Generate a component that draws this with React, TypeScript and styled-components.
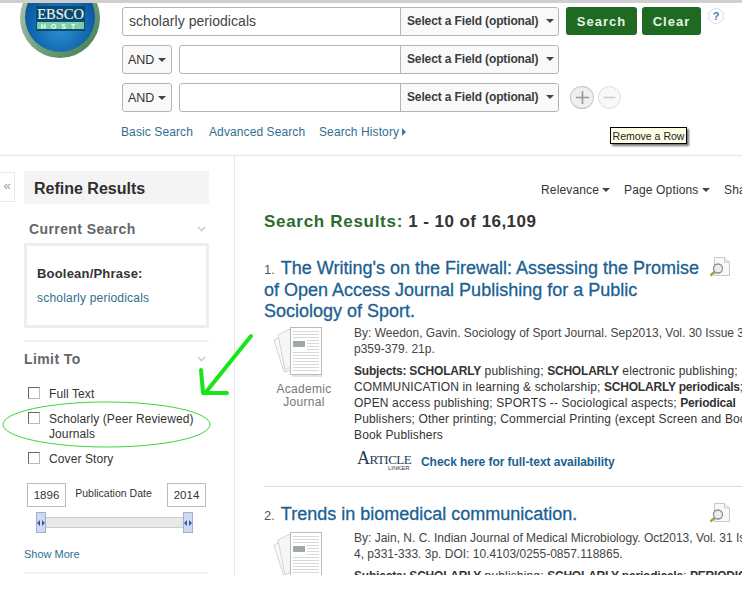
import React from 'react';
import styled, { createGlobalStyle } from 'styled-components';

const GlobalStyle = createGlobalStyle`
    html, body {
        margin: 0;
        padding: 0;
        background: #fff;
        overflow: hidden;
    }
    body {
        font-family: "Liberation Sans", Arial, sans-serif;
        color: #333;
    }
`;

const Page = styled.div`
    position: relative;
    width: 742px;
    height: 604px;
    overflow: hidden;
    background: #fff;
`;

const TopStrip = styled.div`
    height: 3px;
    background: #cfcfcf;
`;

const Header = styled.header`
    position: relative;
    display: flex;
    height: 153px;
    box-sizing: border-box;
    border-bottom: 1px solid #e6e6e6;
`;

const LogoBox = styled.div`
    width: 122px;
    flex: none;
    overflow: hidden;
    height: 60px;
`;

const SearchArea = styled.div`
    display: flex;
    flex-direction: column;
    padding-top: 4px;
`;

const SearchRow = styled.div`
    display: flex;
    align-items: flex-start;
    height: 38px;
`;

const FieldGroup = styled.div`
    display: flex;
    height: 29px;
    box-sizing: border-box;
    border: 1px solid #b4b4b4;
    border-radius: 3px;
    background: #fff;
`;

const TermInput = styled.div<{ $wide?: boolean }>`
    width: ${p => (p.$wide ? 278 : 221)}px;
    box-sizing: border-box;
    padding-left: 6px;
    font-size: 14px;
    line-height: 26px;
    letter-spacing: 0.05px;
    color: #444;
    border-right: 1px solid #b4b4b4;
`;

const FieldSelect = styled.div`
    width: 157px;
    display: flex;
    align-items: center;
    justify-content: space-between;
    box-sizing: border-box;
    padding: 0 4px 1px 6px;
    font-size: 12px;
    font-weight: bold;
    letter-spacing: -0.13px;
    color: #3c3c3c;
    background: #f9f9f9;
    border-radius: 0 3px 3px 0;
`;

const Caret = styled.span`
    display: inline-block;
    width: 0;
    height: 0;
    border-left: 4px solid transparent;
    border-right: 4px solid transparent;
    border-top: 4px solid #444;
`;

const BoolButton = styled.div`
    width: 50px;
    height: 29px;
    margin-right: 7px;
    box-sizing: border-box;
    display: flex;
    align-items: center;
    gap: 4px;
    padding-left: 5px;
    font-size: 12.5px;
    color: #333;
    border: 1px solid #b4b4b4;
    border-radius: 3px;
    background: #f9f9f9;
`;

const GreenButton = styled.div<{ $w: number }>`
    width: ${p => p.$w}px;
    height: 28px;
    margin-left: ${p => (p.$w > 65 ? 7 : 5)}px;
    display: flex;
    align-items: center;
    justify-content: center;
    font-size: 13px;
    font-weight: bold;
    letter-spacing: 1px;
    color: #e8f2e4;
    background: #1f6a22;
    border-radius: 3px;
`;

const HelpBadge = styled.div`
    width: 16px;
    height: 16px;
    margin: 1px 0 0 7px;
    box-sizing: border-box;
    border: 1px solid #d4dde8;
    border-radius: 50%;
    font-size: 11px;
    font-weight: bold;
    line-height: 14px;
    text-align: center;
    color: #4b7fb5;
`;

const RoundButton = styled.div<{ $faded?: boolean }>`
    width: ${p => (p.$faded ? 23 : 24)}px;
    height: 23px;
    margin: 3px 0 0 ${p => (p.$faded ? 4 : 11)}px;
    box-sizing: border-box;
    display: flex;
    align-items: center;
    justify-content: center;
    border: 1px solid ${p => (p.$faded ? '#ddd' : '#c4c4c4')};
    border-radius: 50%;
    background: ${p => (p.$faded ? '#f8f8f8' : '#efefef')};
`;

const SearchLinks = styled.nav`
    display: flex;
    padding: 4px 0 0 0;
    margin-left: -1px;
    font-size: 12px;
    letter-spacing: 0.1px;
    color: #2f6f8f;
`;

const SearchLink = styled.span<{ $w: number }>`
    width: ${p => p.$w}px;
    display: flex;
    align-items: center;
    gap: 3px;
`;

const LinkArrow = styled.span`
    display: inline-block;
    border-left: 4px solid #2f7f9f;
    border-top: 4px solid transparent;
    border-bottom: 4px solid transparent;
`;

const Tooltip = styled.div`
    position: absolute;
    left: 610px;
    top: 124px;
    width: 77px;
    height: 17px;
    box-sizing: border-box;
    border: 1px solid #000;
    background: #ffffe6;
    font-size: 10.5px;
    line-height: 16px;
    text-align: center;
    white-space: nowrap;
    color: #222;
    box-shadow: 2px 2px 2px #777;
`;

const Body = styled.div`
    display: flex;
    height: 419px;
    overflow: hidden;
`;

const CollapseTab = styled.div`
    width: 15px;
    height: 30px;
    margin-top: 16px;
    box-sizing: border-box;
    flex: none;
    border: 1px solid #e8e8e8;
    border-left: none;
    font-size: 13px;
    line-height: 26px;
    text-align: center;
    color: #999;
`;

const Sidebar = styled.aside`
    width: 220px;
    flex: none;
    box-sizing: border-box;
    padding: 15px 25px 0 9px;
    border-right: 1px solid #e6e6e6;
`;

const RefineTitle = styled.div`
    height: 33px;
    padding-left: 10px;
    background: #f4f4f4;
    font-size: 16px;
    font-weight: bold;
    line-height: 35px;
    color: #2e2e2e;
`;

const SectionHead = styled.div<{ $inset?: boolean }>`
    display: flex;
    justify-content: space-between;
    align-items: center;
    padding: 0 3px 0 ${p => (p.$inset ? 5 : 0)}px;
    font-size: 14px;
    font-weight: bold;
    letter-spacing: 0.4px;
    color: #666;
`;

const CurrentHead = styled(SectionHead)`
    margin-top: 17px;
    height: 16px;
`;

const SearchBox = styled.div`
    margin-top: 6px;
    height: 85px;
    box-sizing: border-box;
    padding: 20px 0 0 10px;
    border: 3px solid #eee;
`;

const BoxLabel = styled.div`
    font-size: 13px;
    font-weight: bold;
    letter-spacing: 0.2px;
    color: #333;
`;

const BoxValue = styled.div`
    margin-top: 10px;
    font-size: 12px;
    letter-spacing: 0.2px;
    color: #2f6f8f;
`;

const LimitSection = styled.div`
    margin-top: 12px;
    padding-top: 9px;
    border-top: 2px solid #f0f0f0;
`;

const LimitHead = styled(SectionHead)`
    height: 16px;
`;

const LimitList = styled.div`
    margin-top: 20px;
    display: flex;
    flex-direction: column;
    gap: 10px;
`;

const LimitItem = styled.div`
    display: flex;
    padding-left: 4px;
    font-size: 12px;
    line-height: 15px;
    letter-spacing: 0.1px;
    color: #333;
`;

const Checkbox = styled.span`
    width: 12px;
    height: 12px;
    flex: none;
    box-sizing: border-box;
    margin-right: 9px;
    border: 1px solid #666;
    border-right-color: #bbb;
    border-bottom-color: #bbb;
    background: #fff;
`;

const DateRow = styled.div`
    display: flex;
    justify-content: space-between;
    align-items: flex-start;
    margin-top: 16px;
    padding: 0 3px;
    font-size: 10.5px;
    color: #333;
`;

const DateBox = styled.div`
    width: 39px;
    height: 24px;
    box-sizing: border-box;
    border: 1px solid #bbb;
    font-size: 11.5px;
    line-height: 23px;
    text-align: center;
`;

const DateLabel = styled.div`
    margin: 4px 6px 0 0;
`;

const SliderTrack = styled.div`
    position: relative;
    margin: 10px 25px 0 21px;
    height: 9px;
    background: #e8e8e8;
    border: 1px solid #ccc;
`;

const SliderHandle = styled.span<{ $right?: boolean }>`
    position: absolute;
    top: -6px;
    ${p => (p.$right ? 'right: -10px;' : 'left: -10px;')}
    width: 10px;
    height: 21px;
    box-sizing: border-box;
    border: 1px solid #9fb0d0;
    background: #cfd9f0;
    display: flex;
    align-items: center;
    justify-content: center;
`;

const ShowMore = styled.div`
    margin-top: 20px;
    font-size: 11px;
    color: #2f6f8f;
`;

const SidebarEnd = styled.div`
    margin-top: 12px;
    border-top: 2px solid #f2f2f2;
`;

const Main = styled.main`
    flex: 1;
    min-width: 0;
    padding: 27px 0 0 29px;
    overflow: hidden;
`;

const SortBar = styled.div`
    display: flex;
    margin-left: 277px;
    font-size: 12px;
    letter-spacing: 0.15px;
    color: #333;
    white-space: nowrap;
`;

const SortItem = styled.span<{ $w?: number }>`
    flex: none;
    width: ${p => (p.$w ? `${p.$w}px` : 'auto')};
    display: flex;
    align-items: center;
    gap: 3px;
`;

const ResultsHead = styled.h1`
    margin: 15px 0 0;
    font-size: 17px;
    line-height: 20px;
    font-weight: bold;
    letter-spacing: 0.45px;
    color: #333;
`;

const ResultsWord = styled.span`
    letter-spacing: 0.7px;
    color: #2b6b2e;
`;

const Result = styled.article`
    position: relative;
    width: 478px;
`;

const FirstResult = styled(Result)`
    margin-top: 26px;
    padding-bottom: 15px;
    border-bottom: 1px solid #ddd;
`;

const SecondResult = styled(Result)`
    margin-top: 17px;
`;

const Title = styled.h2`
    margin: 0;
    width: 440px;
    font-size: 18px;
    line-height: 21px;
    font-weight: normal;
    color: #1b5f93;
    -webkit-text-stroke: 0.3px #1b5f93;
`;

const Index = styled.span`
    font-size: 13px;
    color: #555;
    -webkit-text-stroke: 0;
    margin-right: 6px;
`;

const PreviewIcon = styled.div`
    position: absolute;
    top: -2px;
    right: 11px;
`;

const ResultBody = styled.div<{ $top: number }>`
    display: flex;
    margin-top: ${p => p.$top}px;
`;

const ThumbColumn = styled.div`
    width: 90px;
    flex: none;
    display: flex;
    flex-direction: column;
    padding: 1px 0 0 9px;
    box-sizing: border-box;
    font-size: 12px;
    line-height: 13px;
    letter-spacing: 0.3px;
    color: #777;
    text-align: center;
`;

const ThumbLabel = styled.div`
    margin: 5px 0 0 -3px;
    width: 68px;
`;

const Meta = styled.div`
    font-size: 12px;
    line-height: 16px;
    letter-spacing: 0;
    color: #444;
    white-space: nowrap;

    b {
        letter-spacing: -0.2px;
    }
`;

const Subjects = styled.div`
    margin-top: 6px;
    letter-spacing: 0.15px;
    color: #333;
`;

const LinkerRow = styled.div`
    display: flex;
    align-items: center;
    margin-top: 9px;
`;

const LinkerLogo = styled.div`
    width: 64px;
    margin-left: 3px;
    flex: none;
    font-family: "Liberation Serif", serif;
    font-size: 18px;
    line-height: 13px;
    color: #1d3b55;
    font-variant: small-caps;
    letter-spacing: -0.5px;
`;

const LinkerSub = styled.div`
    font-family: "Liberation Sans", sans-serif;
    font-size: 6px;
    line-height: 6px;
    letter-spacing: 0;
    padding-left: 31px;
`;

const CheckLink = styled.span`
    font-size: 12px;
    font-weight: bold;
    letter-spacing: -0.05px;
    color: #1b5f93;
`;

const AnnotationLayer = styled.svg`
    position: absolute;
    left: 0;
    top: 0;
    pointer-events: none;
`;

function Logo() {
    return (
        <svg width="122" height="57" viewBox="0 0 122 57">
            <defs>
                <radialGradient id="lgBlue" cx="50%" cy="65%" r="60%">
                    <stop offset="0" stopColor="#2f8fd0" />
                    <stop offset="0.7" stopColor="#0f66ae" />
                    <stop offset="1" stopColor="#0a4f92" />
                </radialGradient>
                <linearGradient id="lgRing" x1="0" y1="0" x2="1" y2="1">
                    <stop offset="0" stopColor="#b8d0c0" />
                    <stop offset="1" stopColor="#3f7a4a" />
                </linearGradient>
            </defs>
            <circle cx="60" cy="15" r="40" fill="url(#lgRing)" />
            <circle cx="60" cy="14" r="35" fill="url(#lgBlue)" />
            <rect x="36" y="3" width="49" height="25" fill="#0b4a70" />
            <text x="60.5" y="16" textAnchor="middle" fontFamily="Liberation Serif" fontSize="14.5" fill="#e8f4f4" stroke="#e8f4f4" strokeWidth="0.2">EBSCO</text>
            <rect x="37" y="19" width="47" height="7" fill="#7fd0a8" />
            <text x="60.5" y="25.5" textAnchor="middle" fontFamily="Liberation Sans" fontWeight="bold" fontSize="7" letterSpacing="5" fill="#f0fff8">HOST</text>
        </svg>
    );
}

function Thumb() {
    const fullRows = [5, 8, 11, 26, 29, 32, 35, 38, 41, 44];
    const sideRows = [14, 17, 20, 23];
    return (
        <svg width="50" height="52" viewBox="0 0 50 52">
            <path d="M1 14 L14 7 L20 44 L11 46 Z" fill="#fafafa" stroke="#d4d4d4" />
            <path d="M5 9 L17 3 L20 40 L12 44 Z" fill="#f6f6f6" stroke="#d4d4d4" />
            <rect x="17.5" y="1.5" width="31" height="47" fill="#fff" stroke="#bbb" />
            <rect x="19" y="49" width="30" height="2" fill="#e4e4e4" />
            {fullRows.map(y => (
                <rect key={y} x="20" y={y} width="26" height="1" fill="#d8d8d8" />
            ))}
            <rect x="20" y="15" width="12" height="6" fill="#a0a8ac" />
            {sideRows.map(y => (
                <rect key={y} x="34" y={y} width="12" height="1" fill="#d8d8d8" />
            ))}
        </svg>
    );
}

function Preview() {
    return (
        <svg width="22" height="21" viewBox="0 0 22 21">
            <path d="M5.5 1.5 H15.5 L20.5 6 V19.5 H5.5 Z" fill="#f8f8f4" stroke="#c8c8c0" />
            <path d="M15.5 1.5 V6 H20.5" fill="#eee" stroke="#c8c8c0" />
            <circle cx="9" cy="12.5" r="4.5" fill="#e6f0f4" stroke="#8a8f90" strokeWidth="1.3" />
            <path d="M5.5 16 L1.5 19.5" stroke="#a8a030" strokeWidth="2.4" />
        </svg>
    );
}

function Handle() {
    return (
        <svg width="8" height="6" viewBox="0 0 8 6">
            <path d="M0 3 L3 0 V6 Z M8 3 L5 0 V6 Z" fill="#2f5fa8" />
        </svg>
    );
}

function Chevron() {
    return (
        <svg width="9" height="6" viewBox="0 0 9 6">
            <path d="M1 1 L4.5 4.5 L8 1" fill="none" stroke="#ccc" strokeWidth="1.6" />
        </svg>
    );
}

function Annotations() {
    return (
        <AnnotationLayer width="742" height="604" viewBox="0 0 742 604">
            <ellipse cx="106.5" cy="424.5" rx="103.5" ry="22.5" fill="none" stroke="#3cd23c" strokeWidth="1" />
            <path d="M251 336 L206 392 M201 370 L203 393 L227 393" fill="none" stroke="#19e619" strokeWidth="4" strokeLinecap="round" strokeLinejoin="round" />
        </AnnotationLayer>
    );
}

export default function App() {
    return (
        <Page>
            <GlobalStyle />
            <TopStrip />
            <Header>
                <LogoBox><Logo /></LogoBox>
                <SearchArea>
                    <SearchRow>
                        <FieldGroup>
                            <TermInput $wide>scholarly periodicals</TermInput>
                            <FieldSelect>Select a Field (optional) <Caret /></FieldSelect>
                        </FieldGroup>
                        <GreenButton $w={71}>Search</GreenButton>
                        <GreenButton $w={59}>Clear</GreenButton>
                        <HelpBadge>?</HelpBadge>
                    </SearchRow>
                    <SearchRow>
                        <BoolButton>AND <Caret /></BoolButton>
                        <FieldGroup>
                            <TermInput />
                            <FieldSelect>Select a Field (optional) <Caret /></FieldSelect>
                        </FieldGroup>
                    </SearchRow>
                    <SearchRow>
                        <BoolButton>AND <Caret /></BoolButton>
                        <FieldGroup>
                            <TermInput />
                            <FieldSelect>Select a Field (optional) <Caret /></FieldSelect>
                        </FieldGroup>
                        <RoundButton>
                            <svg width="15" height="15" viewBox="0 0 15 15"><path d="M7.5 1 V14 M1 7.5 H14" stroke="#999" strokeWidth="1.6" /></svg>
                        </RoundButton>
                        <RoundButton $faded>
                            <svg width="15" height="15" viewBox="0 0 15 15"><path d="M1.5 7.5 H13.5" stroke="#ccc" strokeWidth="1.6" /></svg>
                        </RoundButton>
                    </SearchRow>
                    <SearchLinks>
                        <SearchLink $w={88}>Basic Search</SearchLink>
                        <SearchLink $w={110}>Advanced Search</SearchLink>
                        <SearchLink $w={100}>Search History <LinkArrow /></SearchLink>
                    </SearchLinks>
                </SearchArea>
                <Tooltip>Remove a Row</Tooltip>
            </Header>
            <Body>
                <CollapseTab>«</CollapseTab>
                <Sidebar>
                    <RefineTitle>Refine Results</RefineTitle>
                    <CurrentHead $inset>Current Search <Chevron /></CurrentHead>
                    <SearchBox>
                        <BoxLabel>Boolean/Phrase:</BoxLabel>
                        <BoxValue>scholarly periodicals</BoxValue>
                    </SearchBox>
                    <LimitSection>
                        <LimitHead>Limit To <Chevron /></LimitHead>
                        <LimitList>
                            <LimitItem><Checkbox />Full Text</LimitItem>
                            <LimitItem><Checkbox /><span>Scholarly (Peer Reviewed)<br />Journals</span></LimitItem>
                            <LimitItem><Checkbox />Cover Story</LimitItem>
                        </LimitList>
                        <DateRow>
                            <DateBox>1896</DateBox>
                            <DateLabel>Publication Date</DateLabel>
                            <DateBox>2014</DateBox>
                        </DateRow>
                        <SliderTrack>
                            <SliderHandle><Handle /></SliderHandle>
                            <SliderHandle $right><Handle /></SliderHandle>
                        </SliderTrack>
                        <ShowMore>Show More</ShowMore>
                        <SidebarEnd />
                    </LimitSection>
                </Sidebar>
                <Main>
                    <SortBar>
                        <SortItem $w={83}>Relevance <Caret /></SortItem>
                        <SortItem $w={100}>Page Options <Caret /></SortItem>
                        <SortItem>Share</SortItem>
                    </SortBar>
                    <ResultsHead><ResultsWord>Search Results:</ResultsWord> 1 - 10 of 16,109</ResultsHead>
                    <FirstResult>
                        <PreviewIcon><Preview /></PreviewIcon>
                        <Title>
                            <Index>1.</Index>The Writing's on the Firewall: Assessing the Promise of Open Access Journal Publishing for a Public Sociology of Sport.
                        </Title>
                        <ResultBody $top={3}>
                            <ThumbColumn>
                                <Thumb />
                                <ThumbLabel>Academic<br />Journal</ThumbLabel>
                            </ThumbColumn>
                            <Meta>
                                <div>By: Weedon, Gavin. Sociology of Sport Journal. Sep2013, Vol. 30 Issue 3,</div>
                                <div>p359-379. 21p.</div>
                                <Subjects>
                                    <div><b>Subjects: SCHOLARLY</b> publishing; <b>SCHOLARLY</b> electronic publishing;</div>
                                    <div>COMMUNICATION in learning &amp; scholarship; <b>SCHOLARLY periodicals</b>;</div>
                                    <div>OPEN access publishing; SPORTS -- Sociological aspects; <b>Periodical</b></div>
                                    <div>Publishers; Other printing; Commercial Printing (except Screen and Books);</div>
                                    <div>Book Publishers</div>
                                </Subjects>
                                <LinkerRow>
                                    <LinkerLogo>Article<LinkerSub>LINKER</LinkerSub></LinkerLogo>
                                    <CheckLink>Check here for full-text availability</CheckLink>
                                </LinkerRow>
                            </Meta>
                        </ResultBody>
                    </FirstResult>
                    <SecondResult>
                        <PreviewIcon><Preview /></PreviewIcon>
                        <Title><Index>2.</Index>Trends in biomedical communication.</Title>
                        <ResultBody $top={4}>
                            <ThumbColumn><Thumb /></ThumbColumn>
                            <Meta>
                                <div>By: Jain, N. C. Indian Journal of Medical Microbiology. Oct2013, Vol. 31 Issue</div>
                                <div>4, p331-333. 3p. DOI: 10.4103/0255-0857.118865.</div>
                                <Subjects>
                                    <div><b>Subjects: SCHOLARLY</b> publishing; <b>SCHOLARLY periodicals</b>; <b>PERIODICALS</b></div>
                                </Subjects>
                            </Meta>
                        </ResultBody>
                    </SecondResult>
                </Main>
            </Body>
            <Annotations />
        </Page>
    );
}
